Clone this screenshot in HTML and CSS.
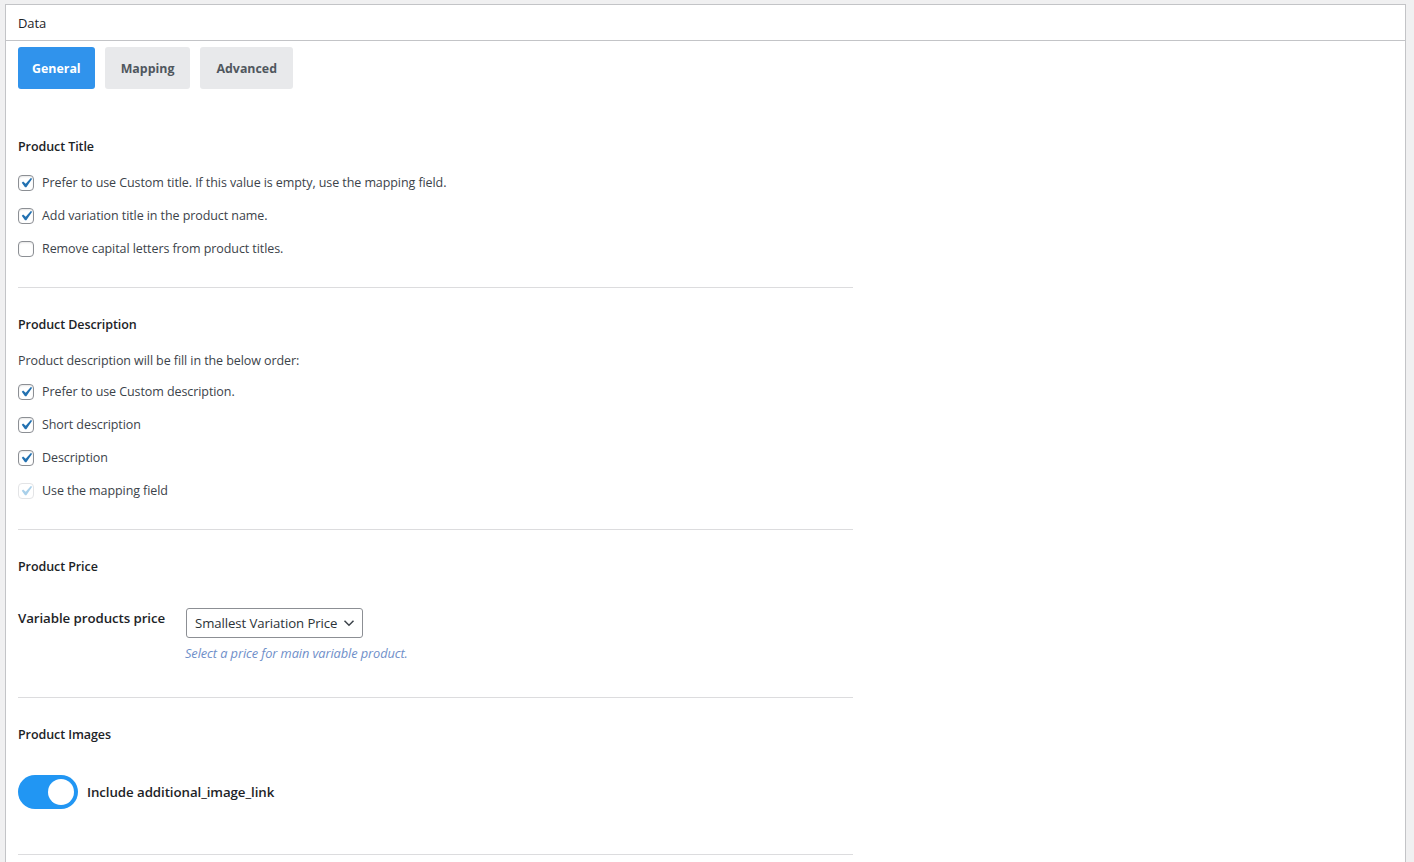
FILE: index.html
```html
<!DOCTYPE html>
<html lang="en">
<head>
<meta charset="utf-8">
<title>Data</title>
<link rel="stylesheet" href="styles.css">
</head>
<body>
<div class="panel">
  <div class="panel-header">Data</div>
  <div class="panel-body">
    <div class="tabs">
      <button class="tab active">General</button>
      <button class="tab">Mapping</button>
      <button class="tab">Advanced</button>
    </div>

    <div class="section">
      <div class="section-title">Product Title</div>
      <div class="rows">
        <label class="row"><span class="cb checked"><svg viewBox="0 0 20 20"><path d="M14.83 4.89l1.34.94-5.81 8.38H9.02L5.78 9.670l1.34-1.25 2.57 2.4z"/></svg></span>Prefer to use Custom title. If this value is empty, use the mapping field.</label>
        <label class="row"><span class="cb checked"><svg viewBox="0 0 20 20"><path d="M14.83 4.89l1.34.94-5.81 8.38H9.02L5.78 9.67l1.34-1.25 2.57 2.4z"/></svg></span>Add variation title in the product name.</label>
        <label class="row"><span class="cb"></span>Remove capital letters from product titles.</label>
      </div>
    </div>

    <div class="section">
      <div class="section-title">Product Description</div>
      <div class="section-desc">Product description will be fill in the below order:</div>
      <div class="rows">
        <label class="row"><span class="cb checked"><svg viewBox="0 0 20 20"><path d="M14.83 4.89l1.34.94-5.81 8.38H9.02L5.78 9.67l1.34-1.25 2.57 2.4z"/></svg></span>Prefer to use Custom description.</label>
        <label class="row"><span class="cb checked"><svg viewBox="0 0 20 20"><path d="M14.83 4.89l1.34.94-5.81 8.38H9.02L5.78 9.67l1.34-1.25 2.57 2.4z"/></svg></span>Short description</label>
        <label class="row"><span class="cb checked"><svg viewBox="0 0 20 20"><path d="M14.83 4.89l1.34.94-5.81 8.38H9.02L5.78 9.67l1.34-1.25 2.57 2.4z"/></svg></span>Description</label>
        <label class="row"><span class="cb checked disabled"><svg viewBox="0 0 20 20"><path d="M14.83 4.89l1.34.94-5.81 8.38H9.02L5.78 9.67l1.34-1.25 2.57 2.4z"/></svg></span>Use the mapping field</label>
      </div>
    </div>

    <div class="section section-price">
      <div class="section-title">Product Price</div>
      <div class="field">
        <div class="field-label">Variable products price</div>
        <div class="field-control">
          <div class="select">Smallest Variation Price<svg class="chev" viewBox="0 0 12 8"><path d="M1.5 1.8 6 6.2l4.5-4.4"/></svg></div>
          <div class="hint">Select a price for main variable product.</div>
        </div>
      </div>
    </div>

    <div class="section section-images">
      <div class="section-title">Product Images</div>
      <div class="toggle-row">
        <span class="switch on"><span class="knob"></span></span>
        <span class="toggle-label">Include additional_image_link</span>
      </div>
    </div>
  </div>
</div>
</body>
</html>
```

FILE: styles.css
```css
html, body {
  margin: 0;
  padding: 0;
  background: #f0f0f1;
  font-family: "Open Sans", "Noto Sans", "Liberation Sans", sans-serif;
  color: #3c434a;
  font-size: 12.5px;
  letter-spacing: -0.08px;
}

.panel {
  margin: 4px 0 0 5px;
  width: 1399px;
  min-height: 900px;
  background: #fff;
  border: 1px solid #c3c4c7;
}

.panel-header {
  height: 35px;
  line-height: 36px;
  padding-left: 12px;
  font-size: 13px;
  font-weight: 500;
  color: #1d2327;
  border-bottom: 1px solid #c3c4c7;
}

.panel-body {
  padding: 0 12px;
}

.tabs {
  display: flex;
  gap: 10px;
  margin-top: 6px;
  margin-bottom: 21px;
}

.tab {
  height: 42px;
  padding: 0 16px;
  border: none;
  border-radius: 3px;
  background: #e8e9eb;
  color: #50575e;
  font-family: inherit;
  font-size: 12.4px;
  letter-spacing: 0;
  font-weight: 700;
  cursor: pointer;
}

.tab.active {
  background: #3093ec;
  color: #fff;
  padding: 0 14px;
}

.section {
  width: 835px;
  padding: 27px 0 28px;
  border-bottom: 1px solid #dcdcde;
}

.section-title {
  line-height: 20px;
  font-weight: 600;
  color: #1d2327;
  margin-bottom: 16px;
}

.section-desc {
  line-height: 20px;
  margin-bottom: 11px;
}

.rows {
  display: flex;
  flex-direction: column;
  gap: 13px;
}

.row {
  display: flex;
  align-items: center;
  gap: 8px;
  line-height: 20px;
  height: 20px;
}

.cb {
  position: relative;
  flex: 0 0 auto;
  width: 14px;
  height: 14px;
  border: 1px solid #8c8f94;
  border-radius: 4px;
  background: #fff;
  box-shadow: inset 0 1px 2px rgba(0, 0, 0, 0.1);
}

.cb svg {
  position: absolute;
  left: -3px;
  top: -3px;
  width: 20px;
  height: 20px;
  fill: #2271b1;
}

.cb.disabled {
  border-color: #e3e4e6;
  box-shadow: none;
}

.cb.disabled svg {
  fill: #a9d0ea;
}

.section-price {
  padding-bottom: 36px;
}

.section-price .section-title {
  margin-bottom: 31px;
}

.field {
  display: flex;
}

.field-label {
  width: 168px;
  flex: 0 0 auto;
  font-size: 13.3px;
  font-weight: 600;
  color: #1d2327;
  line-height: 20px;
}

.select {
  display: inline-flex;
  align-items: center;
  box-sizing: border-box;
  height: 30px;
  padding: 0 7px 0 8px;
  border: 1px solid #8c8f94;
  border-radius: 3px;
  font-size: 13.2px;
  color: #2c3338;
}

.chev {
  width: 12px;
  height: 8px;
  margin-left: 6px;
  fill: none;
  stroke: #3c434a;
  stroke-width: 1.5;
}

.hint {
  margin-top: 7px;
  margin-left: -1px;
  line-height: 16px;
  font-size: 12.8px;
  font-style: italic;
  color: #6f8fc9;
}

.section-images {
  padding-bottom: 45px;
}

.section-images .section-title {
  margin-bottom: 30px;
}

.toggle-row {
  display: flex;
  align-items: center;
  gap: 9px;
}

.switch {
  position: relative;
  width: 60px;
  height: 34px;
  border-radius: 17px;
  background: #ccc;
  flex: 0 0 auto;
}

.switch.on {
  background: #2196f3;
}

.knob {
  position: absolute;
  top: 4px;
  left: 4px;
  width: 26px;
  height: 26px;
  border-radius: 50%;
  background: #fff;
}

.switch.on .knob {
  left: 30px;
}

.toggle-label {
  font-size: 13.3px;
  font-weight: 600;
  color: #1d2327;
}
```
